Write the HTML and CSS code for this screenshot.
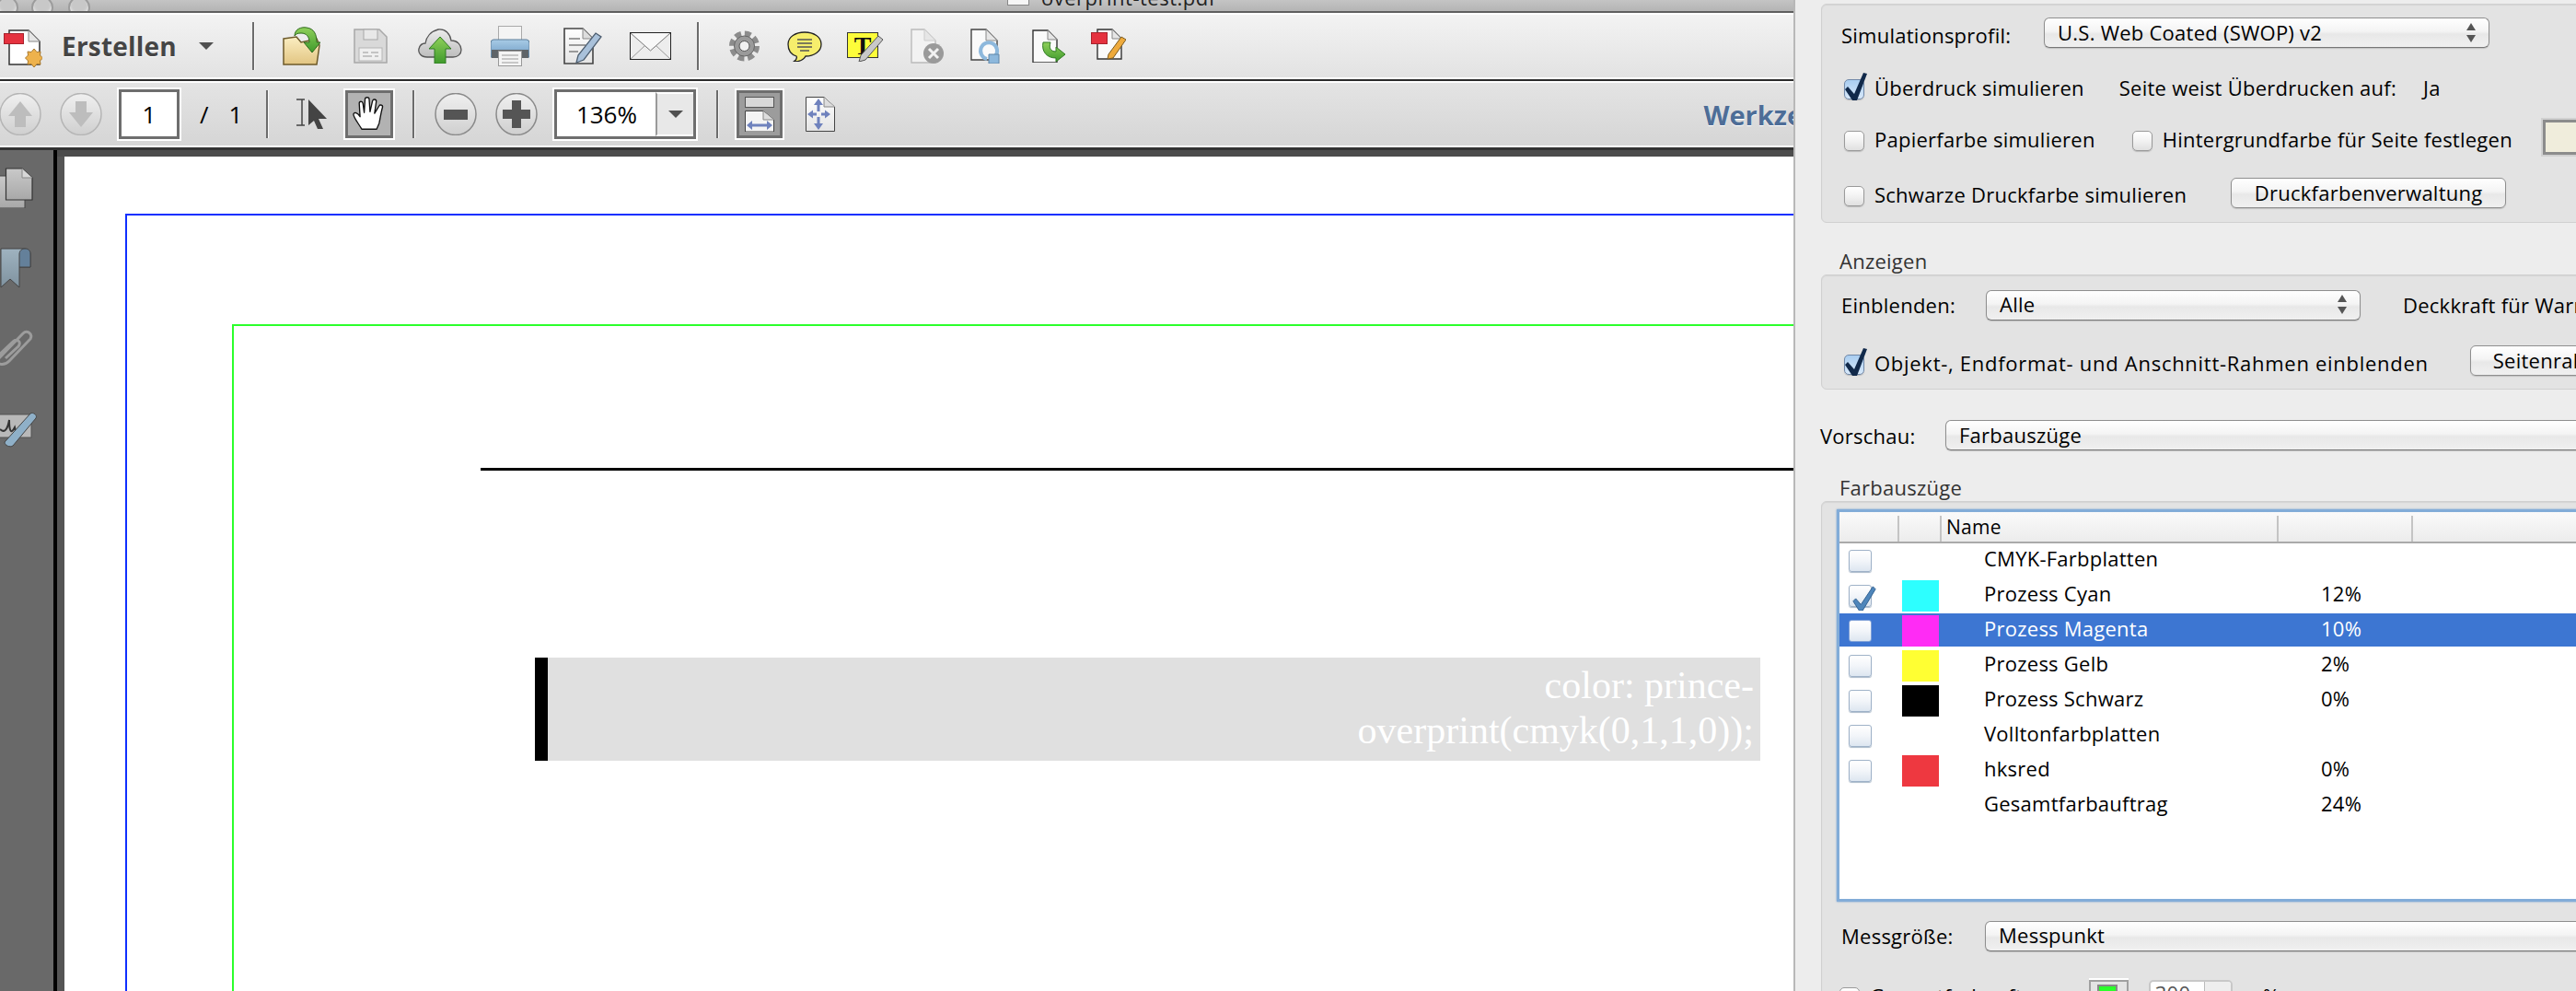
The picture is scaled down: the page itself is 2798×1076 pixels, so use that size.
FILE: index.html
```html
<!DOCTYPE html>
<html lang="de">
<head>
<meta charset="utf-8">
<title>overprint-test.pdf</title>
<link rel="stylesheet" href="styles.css">
</head>
<body>
<svg class="defs" aria-hidden="true"><defs>
<linearGradient id="gTan" x1="0" y1="0" x2="0" y2="1"><stop offset="0" stop-color="#fbeec2"/><stop offset="1" stop-color="#e2c582"/></linearGradient>
<linearGradient id="gGreen" x1="0" y1="0" x2="0" y2="1"><stop offset="0" stop-color="#8fd05a"/><stop offset="1" stop-color="#3f9a2c"/></linearGradient>
<linearGradient id="gDoc" x1="0" y1="0" x2="0" y2="1"><stop offset="0" stop-color="#ffffff"/><stop offset="1" stop-color="#e4e4e4"/></linearGradient>
<linearGradient id="gCircle" x1="0" y1="0" x2="0" y2="1"><stop offset="0" stop-color="#f0f0f0"/><stop offset="1" stop-color="#cfcfcf"/></linearGradient>
<linearGradient id="gBlue" x1="0" y1="0" x2="0" y2="1"><stop offset="0" stop-color="#a8cbe6"/><stop offset="1" stop-color="#6f9cc4"/></linearGradient>
<linearGradient id="gCloud" x1="0" y1="0" x2="0" y2="1"><stop offset="0" stop-color="#ececec"/><stop offset="1" stop-color="#bdbdbd"/></linearGradient>
<linearGradient id="gPage" x1="0" y1="0" x2="0" y2="1"><stop offset="0" stop-color="#c9c9c9"/><stop offset="1" stop-color="#a8a8a8"/></linearGradient>
<linearGradient id="gMark" x1="0" y1="0" x2="0" y2="1"><stop offset="0" stop-color="#9fb3c0"/><stop offset="1" stop-color="#7f929f"/></linearGradient>
</defs></svg>
<div class="window">
  <div class="main">
    <div class="titlebar">
      <span class="light light-a"></span><span class="light light-b"></span><span class="light light-c"></span>
      <span class="title-doc"></span><span class="title-text">overprint-test.pdf</span>
    </div>
    <div class="toolbar tb-one">
      <svg class="ic ic-create" viewBox="0 0 42 42"><path d="M6 1H27L39 13V38H6Z" fill="#fff" stroke="#333" stroke-width="1.5"/><path d="M27 1V13H39" fill="#e6e6e6" stroke="#888"/><rect x="0.5" y="4.5" width="21" height="11" fill="#e5323f" stroke="#a8222c"/><path d="M33 21l3 3.500 4-.5-.5 4 3 3-3 3 .5 4-4-.5-3 3.500-3-3.500-4 .5.500-4-3-3 3-3-.5-4 4 .5z" fill="#eeb24c" stroke="#a8782c"/></svg>
      <span class="create-label">Erstellen</span>
      <span class="drop-arrow"></span>
      <span class="sep sep-a"></span>
      <svg class="ic ic-folder" viewBox="0 0 42 42"><path d="M2 13L16 11L21 17L38 13L41 20L38 41H2Z" fill="url(#gTan)" stroke="#6d5a2a" stroke-width="1.500"/><path d="M14 10C14 2 22 0 27 1C35 2 38 8 38 17L42 17L33 28L24 17L30 17C30 11 27 7 21 7C17 7 15 8 14 10Z" fill="url(#gGreen)" stroke="#2f6a1e"/></svg>
      <svg class="ic ic-save" viewBox="0 0 37 38"><path d="M1 1H28L36 9V37H1Z" fill="#d9d9d9" stroke="#a8a8a8" stroke-width="1.500"/><rect x="11" y="1" width="15" height="11" fill="#e8e8e8" stroke="#a8a8a8"/><rect x="6" y="21" width="25" height="14" fill="#efefef" stroke="#b5b5b5"/><path d="M10 26h6M19 26h8M10 30h10M23 30h4" stroke="#b5b5b5" stroke-width="1.500"/></svg>
      <svg class="ic ic-cloud" viewBox="0 0 48 38"><path d="M10 31C3 31 0 26 1 22C2 18 5 16 8 16C9 9 14 3 22 1C30 0 35 6 36 13C43 13 47 18 47 23C47 28 43 31 38 31Z" fill="url(#gCloud)" stroke="#555" stroke-width="1.300"/><path d="M24 9L36 22H30V38H18V22H12Z" fill="url(#gGreen)" stroke="#2f7a22"/></svg>
      <svg class="ic ic-print" viewBox="0 0 42 44"><rect x="8.500" y="0.500" width="25" height="19" fill="#f4f4f4" stroke="#aaa"/><path d="M3 15H39Q42 15 42 19V34H0V19Q0 15 3 15Z" fill="url(#gBlue)" stroke="#5f7f9a"/><rect x="1" y="26" width="40" height="9" fill="#5f6468"/><rect x="8.500" y="27.500" width="25" height="16" fill="#f4f4f4" stroke="#999"/><path d="M12 32h18M12 36h18M12 40h18" stroke="#b8b8b8" stroke-width="1.300"/></svg>
      <svg class="ic ic-edit" viewBox="0 0 42 40"><path d="M1 1H21L32 12V39H1Z" fill="url(#gDoc)" stroke="#444" stroke-width="1.600"/><path d="M21 1V12H32" fill="#ddd" stroke="#888"/><path d="M6 12h12M6 19h18M6 26h10" stroke="#9a9a9a" stroke-width="2"/><path d="M35 6L41 10L22 35L14 38L16 30Z" fill="#a9c1da" stroke="#4d5e70" stroke-width="1.300"/></svg>
      <svg class="ic ic-mail" viewBox="0 0 45 30"><rect x="0.500" y="0.500" width="44" height="29" fill="#ededed" stroke="#222"/><path d="M1 1L22.500 20L44 1" fill="#f8f8f8" stroke="#777"/><path d="M1 29L16 15M44 29L29 15" stroke="#999"/></svg>
      <span class="sep sep-b"></span>
      <svg class="ic ic-gear" viewBox="0 0 33 34"><circle cx="16.500" cy="17" r="13" fill="none" stroke="#8c8c8c" stroke-width="7" stroke-dasharray="6.500 3.700"/><circle cx="16.500" cy="17" r="11" fill="#9a9a9a" stroke="#666"/><circle cx="16.500" cy="17" r="5.500" fill="#f0f0f0" stroke="#555"/></svg>
      <svg class="ic ic-bubble" viewBox="0 0 38 33"><path d="M10 27C4 25 1 20 1 14C1 6 9 1 19 1C29 1 37 6 37 14C37 22 29 27 20 27C18 31 13 33 7 33C10 31 11 29 10 27Z" fill="#f6ee6c" stroke="#222" stroke-width="1.300"/><path d="M11 9h16M11 13h16M11 17h16M14 21h10" stroke="#555" stroke-width="1.300"/></svg>
      <svg class="ic ic-note" viewBox="0 0 40 32"><rect x="0.500" y="0.500" width="33" height="27" fill="#fdfd3a" stroke="#333"/><text class="note-t" x="17" y="24" text-anchor="middle">T</text><path d="M34 4L39 8L20 30L13 32L15 25Z" fill="#c8c8c8" stroke="#555"/></svg>
      <svg class="ic ic-docx" viewBox="0 0 37 38"><path d="M1 1H15L27 13V37H1Z" fill="#f2f2f2" stroke="#bbb" stroke-width="1.400"/><path d="M15 1V13H27" fill="#e6e6e6" stroke="#ccc"/><circle cx="25" cy="27" r="11" fill="#9a9a9a"/><path d="M20 22L30 32M30 22L20 32" stroke="#f2f2f2" stroke-width="3"/></svg>
      <svg class="ic ic-docq" viewBox="0 0 34 38"><path d="M1 1H17L29 13V34H1Z" fill="#fafafa" stroke="#444" stroke-width="1.400"/><path d="M17 1V13H29" fill="#e6e6e6" stroke="#888"/><path d="M18 33A9 9 0 1 1 27 30" fill="none" stroke="#8db8dc" stroke-width="4"/><path d="M20 28H31V38H20Z" fill="#8db8dc" stroke="#5f86a8"/></svg>
      <svg class="ic ic-docg" viewBox="0 0 37 36"><path d="M1 1H17L27 11V36H1Z" fill="#fafafa" stroke="#333" stroke-width="1.400"/><path d="M17 1V11H27" fill="#e6e6e6" stroke="#888"/><path d="M12 14L20 14C18 20 20 24 26 24V19L36 27L26 35V31C16 31 10 24 12 14Z" fill="url(#gGreen)" stroke="#2f7a22"/></svg>
      <svg class="ic ic-docp" viewBox="0 0 38 34"><path d="M7 1H23L33 11V33H7Z" fill="#fafafa" stroke="#333" stroke-width="1.400"/><path d="M23 1V11H33" fill="#e6e6e6" stroke="#888"/><rect x="0.500" y="4.500" width="17" height="12" fill="#e5323f" stroke="#a8222c"/><path d="M33 9L38 12L24 32L18 33L19 28Z" fill="#eeaa3c" stroke="#7a5a20"/></svg>
    </div>
    <div class="toolbar tb-two">
      <svg class="ic ic-up" viewBox="0 0 46 46"><ellipse cx="22" cy="23" rx="22" ry="22.500" fill="url(#gCircle)" stroke="#b5b5b5" stroke-width="1.500"/><path d="M22 9L35 25H28V37H16V25H9Z" fill="#bdbdbd"/></svg>
      <svg class="ic ic-down" viewBox="0 0 46 46"><ellipse cx="23" cy="23" rx="22" ry="22.500" fill="url(#gCircle)" stroke="#b5b5b5" stroke-width="1.500"/><path d="M23 37L36 21H29V9H17V21H10Z" fill="#bdbdbd"/></svg>
      <span class="field page-field">1</span>
      <span class="page-of">/</span>
      <span class="page-total">1</span>
      <span class="sep sep-c"></span>
      <svg class="ic ic-select" viewBox="0 0 34 34"><path d="M3 1H6V29H3M0 1H9M0 29H9" fill="none" stroke="#444" stroke-width="1.500"/><path d="M13 1L33 22H24L29 33L23 33L19 24L13 29Z" fill="#444"/></svg>
      <span class="toggle toggle-hand"><svg class="ic-hand" viewBox="0 0 40 42"><path d="M11 39C7 32 1 25 1 21C2 18 6 19 9 24L8 8C8 5 12 5 12.500 8L14 19L15 3C15 0 20 0 20 3L21 18L24 5C25 2 29 3 28.500 6L26.500 20L32 11C33 9 37 10 36 13C34 20 33 28 32 32L29 39Z" fill="#fff" stroke="#111" stroke-width="1.500" stroke-linejoin="round"/></svg></span>
      <span class="sep sep-d"></span>
      <svg class="ic ic-minus" viewBox="0 0 46 46"><ellipse cx="23" cy="23" rx="22" ry="22.500" fill="url(#gCircle)" stroke="#8a8a8a" stroke-width="1.500"/><rect x="10" y="18" width="26" height="11" fill="#555"/></svg>
      <svg class="ic ic-plus" viewBox="0 0 46 46"><ellipse cx="23" cy="23" rx="22" ry="22.500" fill="url(#gCircle)" stroke="#8a8a8a" stroke-width="1.500"/><path d="M18 8H28V18H38V28H28V38H18V28H8V18H18Z" fill="#555"/></svg>
      <span class="field zoom-field"><span class="zoom-value">136%</span><span class="zoom-drop"><span class="drop-arrow"></span></span></span>
      <span class="sep sep-e"></span>
      <span class="toggle toggle-fit"><svg class="ic-fit" viewBox="0 0 32 38"><rect x="0.500" y="0.500" width="31" height="11" fill="#d8d8d8" stroke="#555"/><path d="M0.500 15.500H20L31.500 25V38H0.500Z" fill="#f4f4f4" stroke="#444"/><path d="M20 15.500V25H31.500" fill="#ddd" stroke="#888"/><path d="M2 31L8 26V29.500H24V26L30 31L24 36V32.500H8V36Z" fill="#6f82bd"/></svg></span>
      <svg class="ic ic-fitpage" viewBox="0 0 32 38"><path d="M0.500 0.500H20L31.500 11V37.500H0.500Z" fill="url(#gDoc)" stroke="#444"/><path d="M20 0.500V11H31.500" fill="#ddd" stroke="#888"/><path d="M14 2L19 9H15.500V16H12.500V9H9ZM14 36L19 29H15.500V22H12.500V29H9ZM2 19L8 14.500V17.500H12V20.500H8V23.500ZM27 19L21 14.500V17.500H17V20.500H21V23.500Z" fill="#6f82bd"/></svg>
      <span class="tools-label">Werkzeuge</span>
    </div>
    <div class="workspace">
      <div class="sidebar">
        <svg class="side side-pages" viewBox="0 0 36 44"><rect x="-6" y="9" width="33" height="35" fill="url(#gPage)" stroke="#444"/><path d="M6.500 1H24L35 11V35H6.500Z" fill="url(#gPage)" stroke="#333" stroke-width="1.200"/><path d="M24 1V11H35" fill="#d8d8d8" stroke="#888"/></svg>
        <svg class="side side-mark" viewBox="0 0 34 44"><path d="M1 1H26C30 1 33 3 33 7V21H21V43L11 34L1 43Z" fill="url(#gMark)" stroke="#444"/><path d="M21 21V7C21 3 24 1 27 1C31 1 33 3 33 7V21Z" fill="#64809a" stroke="#444"/></svg>
        <svg class="side side-clip" viewBox="0 0 38 46"><path d="M-2 36L25 8C29 4 36 8 33 14L10 38C4 44-6 42-4 34L14 17C18 13 24 17 20 22L6 35" fill="none" stroke="#9c9c9c" stroke-width="3"/></svg>
        <svg class="side side-sign" viewBox="0 0 42 38"><rect x="-4" y="2" width="38" height="25" fill="#b9b9b9" stroke="#555"/><path d="M0 18C4 22 8 20 10 8C10 20 12 24 16 16L18 24L24 20" fill="none" stroke="#333" stroke-width="2"/><path d="M33 1C36-1 41 3 39 6L14 36C11 38 5 36 5 32Z" fill="#8fb0c8" stroke="#444"/></svg>
      </div>
      <div class="gutter">
        <div class="page">
          <div class="frame-blue">
            <div class="frame-green">
              <div class="rule-black"></div>
              <div class="note-box"><p class="note-text">color: prince-<br>overprint(cmyk(0,1,1,0));</p></div>
            </div>
          </div>
        </div>
      </div>
    </div>
  </div>
  <aside class="panel">
    <section class="group group-sim">
      <div class="row row-sim">
        <span class="label lab-sim">Simulationsprofil:</span>
        <span class="select select-sim"><span>U.S. Web Coated (SWOP) v2</span><span class="stepper"></span></span>
      </div>
      <div class="row row-over">
        <span class="cb cb-on"><svg class="check" viewBox="0 0 24 30"><path d="M3 15L10 23L20 0L24 1L13 30H8L0 18Z" fill="#11294a"/></svg></span>
        <span class="cb-text">Überdruck simulieren</span>
        <span class="label lab-weist">Seite weist Überdrucken auf:</span>
        <span class="label lab-ja">Ja</span>
      </div>
      <div class="row row-paper">
        <span class="cb"></span>
        <span class="cb-text">Papierfarbe simulieren</span>
        <span class="cb cb-bg"></span>
        <span class="cb-text">Hintergrundfarbe für Seite festlegen</span>
        <span class="swatch-paper"></span>
      </div>
      <div class="row row-black">
        <span class="cb"></span>
        <span class="cb-text">Schwarze Druckfarbe simulieren</span>
        <span class="button btn-inks">Druckfarbenverwaltung</span>
      </div>
    </section>
    <h2 class="legend legend-show">Anzeigen</h2>
    <section class="group group-show">
      <div class="row row-show">
        <span class="label lab-show">Einblenden:</span>
        <span class="select select-show"><span>Alle</span><span class="stepper"></span></span>
        <span class="label lab-deck">Deckkraft für Warnungen</span>
      </div>
      <div class="row row-frames">
        <span class="cb cb-on"><svg class="check" viewBox="0 0 24 30"><path d="M3 15L10 23L20 0L24 1L13 30H8L0 18Z" fill="#11294a"/></svg></span>
        <span class="cb-text cb-text-wide">Objekt-, Endformat- und Anschnitt-Rahmen einblenden</span>
        <span class="button btn-frames">Seitenrahmen</span>
      </div>
    </section>
    <div class="row row-preview">
      <span class="label lab-preview">Vorschau:</span>
      <span class="select select-preview"><span>Farbauszüge</span></span>
    </div>
    <h2 class="legend legend-sep">Farbauszüge</h2>
    <section class="group group-sep">
      <div class="table">
        <div class="thead"><span class="th th-a"></span><span class="th th-b"></span><span class="th th-c">Name</span><span class="th th-d"></span><span class="th th-e"></span></div>
        <div class="trow"><span class="tcb"></span><span class="chip"></span><span class="tname">CMYK-Farbplatten</span></div>
        <div class="trow"><span class="tcb"><svg class="tcheck" viewBox="0 0 28 30"><path d="M4 16L10 23L24 2L27 5L12 30H8L1 19Z" fill="#4f86bb" stroke="#2f5f8f"/></svg></span><span class="chip chip-cyan"></span><span class="tname">Prozess Cyan</span><span class="tpct">12%</span></div>
        <div class="trow trow-sel"><span class="tcb"></span><span class="chip chip-magenta"></span><span class="tname">Prozess Magenta</span><span class="tpct">10%</span></div>
        <div class="trow"><span class="tcb"></span><span class="chip chip-yellow"></span><span class="tname">Prozess Gelb</span><span class="tpct">2%</span></div>
        <div class="trow"><span class="tcb"></span><span class="chip chip-black"></span><span class="tname">Prozess Schwarz</span><span class="tpct">0%</span></div>
        <div class="trow"><span class="tcb"></span><span class="chip"></span><span class="tname">Volltonfarbplatten</span></div>
        <div class="trow"><span class="tcb"></span><span class="chip chip-red"></span><span class="tname">hksred</span><span class="tpct">0%</span></div>
        <div class="trow"><span class="tcb tcb-none"></span><span class="chip"></span><span class="tname">Gesamtfarbauftrag</span><span class="tpct">24%</span></div>
      </div>
      <div class="row row-size">
        <span class="label lab-size">Messgröße:</span>
        <span class="select select-size"><span>Messpunkt</span></span>
      </div>
      <div class="row row-total">
        <span class="cb"></span>
        <span class="cb-text">Gesamtfarbauftrag</span>
        <span class="swatch-green"><span class="swatch-green-fill"></span></span>
        <span class="num-input"><span class="num-value">300</span><span class="num-step"></span></span>
        <span class="label lab-pct">%</span>
      </div>
    </section>
  </aside>
</div>
</body>
</html>
```

FILE: styles.css
```css
* { box-sizing: border-box; }
html, body { margin: 0; padding: 0; width: 2798px; height: 1076px; overflow: hidden; background: #ededed; }
body { font-family: "Open Sans", "DejaVu Sans", sans-serif; color: #000; }
.defs { position: absolute; width: 0; height: 0; }
.window { display: flex; width: 2798px; height: 1076px; overflow: hidden; }
.main { width: 1948px; flex: none; display: flex; flex-direction: column; overflow: hidden; }

/* title bar */
.titlebar { height: 12px; flex: none; display: flex; align-items: flex-end; overflow: hidden; background: linear-gradient(#c4c4c4, #b4b4b4); }
.light { width: 24px; height: 24px; border-radius: 50%; flex: none; background: #c8c8c8; border: 2px solid #9c9c9c; margin-bottom: -8px; box-shadow: inset 0 -3px 3px #e8e8e8; }
.light-a { margin-left: -4px; }
.light-b { margin-left: 14px; }
.light-c { margin-left: 16px; }
.title-doc { width: 24px; height: 24px; flex: none; background: #f6f6f6; border: 1px solid #888; margin-left: 996px; margin-bottom: 6px; }
.title-text { margin-left: 13px; font-size: 22px; line-height: 24px; margin-bottom: 3px; color: #222; white-space: nowrap; letter-spacing: .5px; }

/* toolbars */
.toolbar { flex: none; display: flex; align-items: center; box-shadow: inset 0 2px #fff, inset 0 -2px #fff; }
.tb-one { height: 76px; border-top: 2px solid #5e5e5e; border-bottom: 2px solid #2c2c2c; background: linear-gradient(#f3f3f3, #e2e2e2); padding-left: 4px; }
.tb-two { height: 75px; border-bottom: 3px solid #333; background: linear-gradient(#e4e4e4, #d5d5d5); }
.ic { display: block; flex: none; }
.sep { width: 2px; flex: none; background: #6c6c6c; box-shadow: 1px 0 #fafafa; }
.tb-one .sep { height: 52px; }
.tb-two .sep { height: 52px; }

.ic-create { width: 42px; height: 42px; margin-top: 6px; }
.create-label { margin-left: 21px; font-size: 28px; font-weight: 700; letter-spacing: .2px; color: #454545; line-height: 32px; text-shadow: 0 1px #fff; }
.drop-arrow { width: 0; height: 0; flex: none; border-left: 8px solid transparent; border-right: 8px solid transparent; border-top: 8px solid #505050; }
.create-label + .drop-arrow { margin-left: 24px; }
.sep-a { margin-left: 42px; }
.ic-folder { width: 42px; height: 42px; margin-left: 30px; }
.ic-save { width: 37px; height: 38px; margin-left: 36px; }
.ic-cloud { width: 48px; height: 38px; margin-left: 33px; }
.ic-print { width: 42px; height: 44px; margin-left: 31px; }
.ic-edit { width: 42px; height: 40px; margin-left: 37px; }
.ic-mail { width: 45px; height: 30px; margin-left: 30px; }
.sep-b { margin-left: 28px; }
.ic-gear { width: 33px; height: 34px; margin-left: 33px; }
.ic-bubble { width: 38px; height: 33px; margin-left: 30px; }
.ic-note { width: 40px; height: 32px; margin-left: 27px; margin-top: 2px; }
.note-t { font-family: "Liberation Serif", serif; font-weight: 700; font-size: 28px; fill: #111; }
.ic-docx { width: 37px; height: 38px; margin-left: 29px; }
.ic-docq { width: 34px; height: 38px; margin-left: 28px; }
.ic-docg { width: 37px; height: 36px; margin-left: 33px; }
.ic-docp { width: 38px; height: 34px; margin-left: 27px; margin-top: -4px; }

.ic-up { width: 46px; height: 46px; }
.ic-down { width: 46px; height: 46px; margin-left: 19px; }
.field { flex: none; height: 54px; background: #fff; border: 3px solid #6e6e6e; box-shadow: 0 0 0 2px #fff; display: flex; align-items: center; font-size: 26px; color: #000; }
.page-field { width: 66px; margin-left: 18px; justify-content: center; }
.page-of { margin-left: 22px; font-size: 26px; }
.page-total { margin-left: 22px; font-size: 26px; }
.sep-c { margin-left: 26px; }
.ic-select { width: 34px; height: 34px; margin-left: 31px; }
.toggle { flex: none; display: flex; align-items: center; justify-content: center; border: 3px solid #6e6e6e; box-shadow: 0 0 0 2px #fff; }
.toggle-hand { width: 52px; height: 52px; margin-left: 19px; background: #b2b2b2; }
.ic-hand { width: 36px; height: 40px; }
.sep-d { margin-left: 21px; }
.ic-minus { width: 46px; height: 46px; margin-left: 22px; }
.ic-plus { width: 46px; height: 46px; margin-left: 20px; }
.zoom-field { width: 154px; margin-left: 18px; }
.zoom-value { width: 107px; text-align: center; }
.zoom-drop { flex: 1; align-self: stretch; border-left: 2px solid #9a9a9a; background: #e8e8e8; display: flex; align-items: center; justify-content: center; border-top: 2px solid #fff; border-bottom: 2px solid #fff; }
.sep-e { margin-left: 22px; }
.toggle-fit { width: 50px; height: 52px; margin-left: 20px; background: #9c9c9c; }
.ic-fit { width: 32px; height: 38px; }
.ic-fitpage { width: 32px; height: 38px; margin-left: 25px; }
.tools-label { margin-left: 943px; font-size: 29px; font-weight: 700; color: #4d6d97; white-space: nowrap; text-shadow: 0 1px #fff; }

/* workspace */
.workspace { flex: 1; display: flex; min-height: 0; }
.sidebar { width: 62px; flex: none; background: #696969; border-right: 4px solid; border-image: linear-gradient(90deg, #aaa 50%, #000 50%) 1; display: flex; flex-direction: column; overflow: hidden; padding-top: 19px; }
.side { display: block; flex: none; }
.side-pages { width: 36px; height: 44px; }
.side-mark { width: 34px; height: 44px; margin-top: 43px; }
.side-clip { width: 38px; height: 46px; margin-top: 41px; }
.side-sign { width: 42px; height: 38px; margin-top: 48px; }
.gutter { flex: 1; min-width: 0; background: #555; padding: 7px 0 0 8px; background-image: linear-gradient(#4c4c4c, #4c4c4c); background-repeat: no-repeat; background-size: 100% 7px; }
.page { background: #fff; height: 100%; padding: 62px 0 0 66px; overflow: hidden; }
.frame-blue { width: 2100px; height: 1200px; border: solid #0f2fff; border-width: 2px 0 0 2px; padding: 118px 0 0 114px; }
.frame-green { width: 1900px; height: 1000px; border: solid #2bff2b; border-width: 2px 0 0 2px; padding: 154px 0 0 268px; }
.rule-black { height: 3px; background: #000; }
.note-box { margin: 203px 0 0 59px; width: 1331px; height: 112px; background: #e0e0e0; border-left: 14px solid #000; padding: 6px 7px 0 0; }
.note-text { margin: 0; font-family: "Liberation Serif", serif; font-size: 42px; line-height: 49px; color: #fff; text-align: right; }

/* panel */
.panel { flex: 1; min-width: 0; background: #ededed; border-left: 2px solid #b8b8b8; padding-left: 28px; overflow: hidden; font-size: 22px; line-height: 24px; letter-spacing: .25px; }
.group { width: 900px; background: #e3e3e3; border: 1px solid #d0d0d0; border-radius: 6px; box-shadow: inset 0 1px 1px #d4d4d4; }
.row { display: flex; align-items: center; height: 40px; white-space: nowrap; }
.label, .cb-text { flex: none; }
.select { flex: none; display: flex; align-items: center; justify-content: space-between; height: 33px; background: linear-gradient(#fff, #f4f4f4 45%, #e8e8e8 55%, #f0f0f0); border: 1px solid #8e8e8e; border-bottom-color: #777; border-radius: 6px; box-shadow: 0 1px 1px #c0c0c0; padding: 0 14px 2px 14px; }
.stepper { width: 10px; height: 24px; flex: none; position: relative; }
.stepper::before, .stepper::after { content: ""; position: absolute; left: 0; width: 0; height: 0; border-left: 5px solid transparent; border-right: 5px solid transparent; }
.stepper::before { top: 2px; border-bottom: 8px solid #555; }
.stepper::after { bottom: 1px; border-top: 8px solid #555; }
.button { flex: none; display: flex; align-items: center; justify-content: center; height: 33px; background: linear-gradient(#fff, #f4f4f4 45%, #e8e8e8 55%, #f0f0f0); border: 1px solid #8e8e8e; border-radius: 6px; box-shadow: 0 1px 1px #c0c0c0; }
.cb { flex: none; width: 22px; height: 22px; position: relative; margin-top: 4px; margin-left: 3px; border: 1px solid #9a9a9a; border-radius: 5px; background: linear-gradient(#fff, #f2f2f2 50%, #e0e0e0); box-shadow: 0 1px 1px #bbb; }
.cb-on { background: linear-gradient(#a9cdf0, #d7e8fa); border-color: #7088a8; }
.check { position: absolute; left: 0; top: -8px; width: 24px; height: 30px; }
.cb-text { margin-left: 11px; }
.cb-text-wide { letter-spacing: .72px; }

.group-sim { margin-top: 4px; height: 238px; padding: 13px 0 0 21px; }
.row-over { margin-top: 17px; }
.row-paper { margin-top: 16px; }
.row-black { margin-top: 20px; }
.lab-sim { width: 220px; }
.select-sim { width: 484px; margin-bottom: 5px; }
.lab-weist { margin-left: 38px; }
.lab-ja { margin-left: 29px; }
.cb-bg { margin-left: 40px; }
.swatch-paper { flex: none; width: 40px; height: 38px; margin-left: 33px; margin-top: -4px; background: #f0eddc; border: 3px solid #8c8c8c; box-shadow: 0 0 0 2px #d0d0d0; }
.btn-inks { width: 299px; margin-left: 48px; margin-bottom: 4px; }

.legend { margin: 0; font-size: 22px; line-height: 24px; font-weight: 400; color: #333; padding-left: 20px; }
.legend-show { margin-top: 29px; }
.group-show { margin-top: 3px; height: 125px; padding: 12px 0 0 21px; }
.lab-show { width: 157px; }
.select-show { width: 407px; }
.lab-deck { margin-left: 46px; }
.row-frames { margin-top: 23px; }
.btn-frames { width: 200px; margin-left: 45px; margin-bottom: 6px; justify-content: flex-start; padding-left: 24px; }

.row-preview { margin-top: 30px; height: 40px; }
.lab-preview { width: 136px; margin-left: -1px; }
.select-preview { width: 800px; margin-bottom: 1px; }
.legend-sep { margin-top: 24px; }
.group-sep { margin-top: 3px; height: 600px; padding: 8px 0 0 16px; }

.table { width: 860px; height: 426px; background: #fff; border: 3px solid #82acd8; box-shadow: 0 0 2px #6f9ccc; }
.thead { height: 34px; display: flex; align-items: flex-end; background: linear-gradient(#fafafa, #ececec); border-bottom: 2px solid #aaa; font-size: 21px; line-height: 24px; }
.th { height: 28px; border-right: 2px solid #c4c4c4; flex: none; }
.th-a { width: 65px; }
.th-b { width: 46px; }
.th-c { width: 366px; padding-left: 5px; }
.th-d { width: 146px; }
.th-e { width: 300px; border-right: 0; }
.trow { display: flex; align-items: center; height: 36px; margin-bottom: 2px; }
.tcb { flex: none; width: 25px; height: 24px; margin: 2px 0 0 10px; position: relative; border: 1px solid #9fb2c8; border-radius: 3px; background: linear-gradient(#fff, #f2f5f9 50%, #dde6f0); box-shadow: 0 1px 1px #a8b8c8; }
.tcb-none { visibility: hidden; }
.tcheck { position: absolute; left: 2px; top: -1px; width: 28px; height: 28px; }
.chip { flex: none; width: 40px; height: 34px; margin-left: 33px; align-self: flex-end; }
.chip-cyan { background: #2dffff; }
.chip-magenta { background: #ff2bf5; }
.chip-yellow { background: #ffff33; }
.chip-black { background: #000; }
.chip-red { background: #ee3840; }
.tname { flex: none; width: 366px; margin-left: 49px; padding-bottom: 5px; }
.tpct { flex: none; padding-bottom: 5px; }
.trow-sel { background: #3d76d2; color: #fff; }
.trow-sel .tcb { border-color: #7fa0d8; box-shadow: none; }

.row-size { margin-top: 17px; }
.lab-size { width: 156px; margin-left: 5px; }
.select-size { width: 700px; }
.row-total { margin-top: 25px; }
.swatch-green { flex: none; width: 43px; height: 38px; margin-left: 38px; margin-top: 4px; background: #e4e4e4; border: 2px solid #a0a0a0; box-shadow: 0 -2px #fff; padding: 3px 10px 3px 7px; }
.swatch-green-fill { display: block; width: 100%; height: 100%; background: #2bff2b; border: 2px solid #888; }
.num-input { flex: none; width: 91px; height: 34px; margin-left: 22px; display: flex; background: #fff; border: 2px solid #c8c8c8; border-radius: 5px; overflow: hidden; color: #555; }
.num-value { width: 58px; padding-left: 5px; }
.num-step { flex: 1; background: #eee; border-left: 1px solid #bbb; }
.lab-pct { margin-left: 33px; }
```
